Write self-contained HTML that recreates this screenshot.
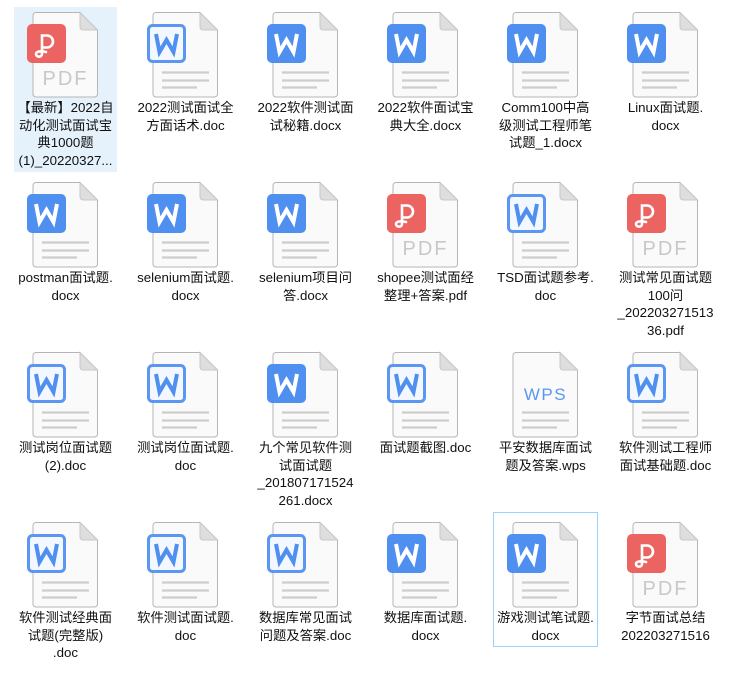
<!DOCTYPE html>
<html><head><meta charset="utf-8"><style>
body{margin:0;width:736px;height:681px;background:#fff;position:relative;overflow:hidden;font-family:"Liberation Sans","Noto Sans CJK SC",sans-serif;}
.c{position:absolute;width:103px;height:165px;}
.c svg{position:absolute;left:0;top:0;}
.t{position:absolute;left:-8px;width:119px;top:92px;text-align:center;font-size:13.3px;line-height:17.7px;color:#111;}
.sel{background:#e5f1fb;}
</style></head><body>
<svg width="0" height="0" style="position:absolute">
<defs>
<symbol id="pg" viewBox="0 0 103 92">
<path d="M22,5.5 H66 L83.5,23 V87 a3,3 0 0 1 -3,3 H22 a3,3 0 0 1 -3,-3 V8.5 a3,3 0 0 1 3,-3z" fill="#fafafa" stroke="#b5b5b5"/>
<path d="M66,5.5 V20 a3,3 0 0 0 3,3 H83.5z" fill="#dedede" stroke="#c8c8c8"/>
</symbol>
<symbol id="pdf" viewBox="0 0 103 92">
<use href="#pg"/>
<rect x="13" y="17" width="39" height="39" rx="5" fill="#ec6461"/>
<path d="M28,47 V28.5 h5 a6,6 0 0 1 0,12 h-5 M28,47 c0,3.5 -6,3.5 -6,0 c0,-2.5 5,-3.5 10,-2" fill="none" stroke="#fff" stroke-width="2.6" stroke-linecap="round"/>
<text x="51.5" y="78" text-anchor="middle" font-family="Liberation Sans" font-size="20" fill="#c8c8c8" letter-spacing="2">PDF</text>
</symbol>
<symbol id="lines" viewBox="0 0 103 92">
<path d="M28,65.5 H75 M28,73.5 H75 M28,80.5 H63" stroke="#cdcdcd" stroke-width="2.2"/>
</symbol>
<symbol id="docx" viewBox="0 0 103 92">
<use href="#pg"/><use href="#lines"/>
<rect x="13" y="17" width="39" height="39" rx="5" fill="#4f8ff0"/>
<path d="M22,27 L25.5,45 L32.5,33 L39.5,45 L43,27" fill="none" stroke="#fff" stroke-width="4"/>
</symbol>
<symbol id="doc" viewBox="0 0 103 92">
<use href="#pg"/><use href="#lines"/>
<rect x="14.5" y="18.5" width="36" height="36" rx="4" fill="#f3f7ff" stroke="#5b96f0" stroke-width="3"/>
<path d="M22,27 L25.5,45 L32.5,33 L39.5,45 L43,27" fill="none" stroke="#4f8ff0" stroke-width="4"/>
</symbol>
<symbol id="wps" viewBox="0 0 103 92">
<use href="#pg"/><use href="#lines"/>
<text x="51.5" y="53" text-anchor="middle" font-family="Liberation Sans" font-size="17" fill="#5b96f0" letter-spacing="1.5">WPS</text>
</symbol>
</defs></svg>

<div class="c sel" style="left:14px;top:7px"><svg width="103" height="92"><use href="#pdf"/></svg><div class="t">【最新】2022自<br>动化测试面试宝<br>典1000题<br>(1)_20220327...</div></div>
<div class="c" style="left:134px;top:7px"><svg width="103" height="92"><use href="#doc"/></svg><div class="t">2022测试面试全<br>方面话术.doc</div></div>
<div class="c" style="left:254px;top:7px"><svg width="103" height="92"><use href="#docx"/></svg><div class="t">2022软件测试面<br>试秘籍.docx</div></div>
<div class="c" style="left:374px;top:7px"><svg width="103" height="92"><use href="#docx"/></svg><div class="t">2022软件面试宝<br>典大全.docx</div></div>
<div class="c" style="left:494px;top:7px"><svg width="103" height="92"><use href="#docx"/></svg><div class="t">Comm100中高<br>级测试工程师笔<br>试题_1.docx</div></div>
<div class="c" style="left:614px;top:7px"><svg width="103" height="92"><use href="#docx"/></svg><div class="t">Linux面试题.<br>docx</div></div>

<div class="c" style="left:14px;top:177px"><svg width="103" height="92"><use href="#docx"/></svg><div class="t">postman面试题.<br>docx</div></div>
<div class="c" style="left:134px;top:177px"><svg width="103" height="92"><use href="#docx"/></svg><div class="t">selenium面试题.<br>docx</div></div>
<div class="c" style="left:254px;top:177px"><svg width="103" height="92"><use href="#docx"/></svg><div class="t">selenium项目问<br>答.docx</div></div>
<div class="c" style="left:374px;top:177px"><svg width="103" height="92"><use href="#pdf"/></svg><div class="t">shopee测试面经<br>整理+答案.pdf</div></div>
<div class="c" style="left:494px;top:177px"><svg width="103" height="92"><use href="#doc"/></svg><div class="t">TSD面试题参考.<br>doc</div></div>
<div class="c" style="left:614px;top:177px"><svg width="103" height="92"><use href="#pdf"/></svg><div class="t">测试常见面试题<br>100问<br>_202203271513<br>36.pdf</div></div>

<div class="c" style="left:14px;top:347px"><svg width="103" height="92"><use href="#doc"/></svg><div class="t">测试岗位面试题<br>(2).doc</div></div>
<div class="c" style="left:134px;top:347px"><svg width="103" height="92"><use href="#doc"/></svg><div class="t">测试岗位面试题.<br>doc</div></div>
<div class="c" style="left:254px;top:347px"><svg width="103" height="92"><use href="#docx"/></svg><div class="t">九个常见软件测<br>试面试题<br>_201807171524<br>261.docx</div></div>
<div class="c" style="left:374px;top:347px"><svg width="103" height="92"><use href="#doc"/></svg><div class="t">面试题截图.doc</div></div>
<div class="c" style="left:494px;top:347px"><svg width="103" height="92"><use href="#wps"/></svg><div class="t">平安数据库面试<br>题及答案.wps</div></div>
<div class="c" style="left:614px;top:347px"><svg width="103" height="92"><use href="#doc"/></svg><div class="t">软件测试工程师<br>面试基础题.doc</div></div>

<div class="c" style="left:14px;top:517px"><svg width="103" height="92"><use href="#doc"/></svg><div class="t">软件测试经典面<br>试题(完整版)<br>.doc</div></div>
<div class="c" style="left:134px;top:517px"><svg width="103" height="92"><use href="#doc"/></svg><div class="t">软件测试面试题.<br>doc</div></div>
<div class="c" style="left:254px;top:517px"><svg width="103" height="92"><use href="#doc"/></svg><div class="t">数据库常见面试<br>问题及答案.doc</div></div>
<div class="c" style="left:374px;top:517px"><svg width="103" height="92"><use href="#docx"/></svg><div class="t">数据库面试题.<br>docx</div></div>
<div class="c" style="left:494px;top:513px;outline:1px solid #99d1ff;height:133px;"><svg width="103" height="92" style="top:4px"><use href="#docx"/></svg><div class="t" style="top:96px">游戏测试笔试题.<br>docx</div></div>
<div class="c" style="left:614px;top:517px"><svg width="103" height="92"><use href="#pdf"/></svg><div class="t">字节面试总结<br>202203271516</div></div>
</body></html>
